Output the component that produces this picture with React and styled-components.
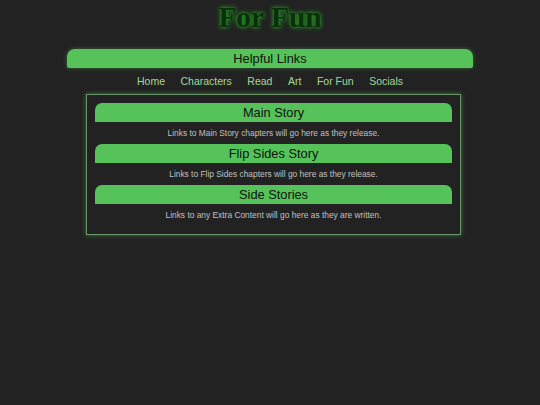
import React from "react";
import styled, { createGlobalStyle } from "styled-components";

const GlobalStyle = createGlobalStyle`
  html, body {
    margin: 0;
    padding: 0;
    background: #222222;
    font-family: "Liberation Sans", Arial, sans-serif;
  }
`;

const links = ["Home", "Characters", "Read", "Art", "For Fun", "Socials"];

const sections = [
  {
    title: "Main Story",
    text: "Links to Main Story chapters will go here as they release.",
  },
  {
    title: "Flip Sides Story",
    text: "Links to Flip Sides chapters will go here as they release.",
  },
  {
    title: "Side Stories",
    text: "Links to any Extra Content will go here as they are written.",
  },
];

const App = () => {
  return (
    <Page>
      <GlobalStyle />
      <Title>For Fun</Title>
      <LinksBar>Helpful Links</LinksBar>
      <Nav>
        {links.map((link) => (
          <NavLink key={link} href="#">
            {link}
          </NavLink>
        ))}
      </Nav>
      <StoryBox>
        {sections.map((section) => (
          <Section key={section.title}>
            <SectionHeader>{section.title}</SectionHeader>
            <SectionText>{section.text}</SectionText>
          </Section>
        ))}
      </StoryBox>
    </Page>
  );
};

export default App;

const Page = styled.div`
  width: 540px;
  min-height: 405px;
  display: flex;
  flex-direction: column;
`;

const Title = styled.h1`
  margin: 0;
  height: 34px;
  text-align: center;
  font-family: "Liberation Serif", "Times New Roman", serif;
  font-weight: 700;
  font-size: 29.4px;
  line-height: 34px;
  color: #0a300a;
  text-shadow: 0 0 5px #2fa82f, 0 0 3px #1f7a1f;
`;

const LinksBar = styled.div`
  margin: 15px 67px 0;
  height: 19px;
  background: #56c25a;
  border-radius: 8px 8px 2px 2px;
  box-shadow: 0 0 4px rgba(70, 170, 70, 0.55);
  color: #111;
  font-size: 12.8px;
  line-height: 19px;
  text-align: center;
`;

const Nav = styled.nav`
  margin: 6px 0;
  height: 14px;
  display: flex;
  justify-content: center;
  gap: 15.5px;
`;

const NavLink = styled.a`
  color: #a4d896;
  font-size: 10.5px;
  line-height: 14px;
  text-decoration: none;
`;

const StoryBox = styled.div`
  margin: 0 79px 0 86px;
  padding: 8px;
  border: 1px solid #6a966a;
  box-shadow: 0 0 5px rgba(90, 180, 90, 0.55);
  display: flex;
  flex-direction: column;
`;

const Section = styled.div`
  display: flex;
  flex-direction: column;
`;

const SectionHeader = styled.div`
  height: 19px;
  background: #56c25a;
  border-radius: 7px 7px 0 0;
  color: #111;
  font-size: 12.8px;
  line-height: 20px;
  text-align: center;
`;

const SectionText = styled.div`
  height: 22px;
  color: #c0c0c0;
  font-size: 8.4px;
  line-height: 22px;
  text-align: center;
`;
